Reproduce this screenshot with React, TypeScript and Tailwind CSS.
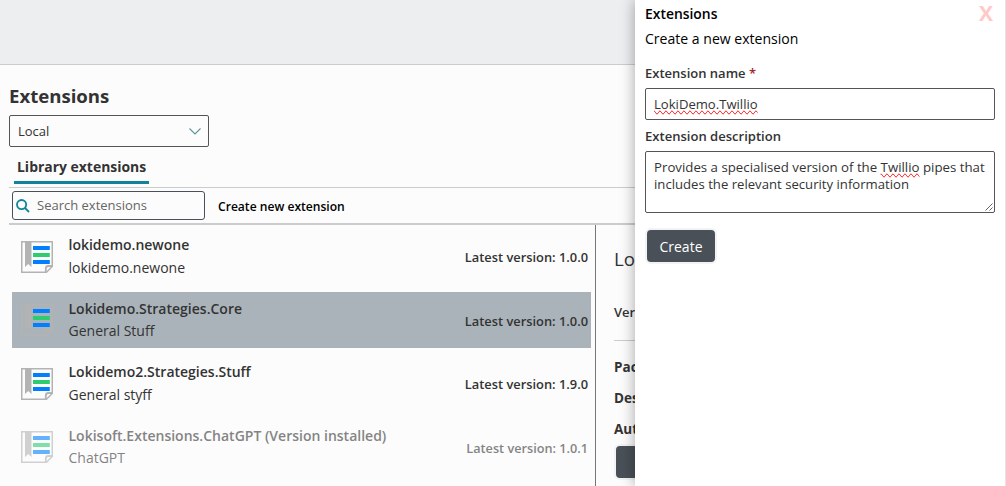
import React from "react";

type Extension = {
  name: string;
  description: string;
  version: string;
  selected?: boolean;
  installed?: boolean;
};

const extensions: Extension[] = [
  { name: "lokidemo.newone", description: "lokidemo.newone", version: "1.0.0" },
  { name: "Lokidemo.Strategies.Core", description: "General Stuff", version: "1.0.0", selected: true },
  { name: "Lokidemo2.Strategies.Stuff", description: "General styff", version: "1.9.0" },
  { name: "Lokisoft.Extensions.ChatGPT (Version installed)", description: "ChatGPT", version: "1.0.1", installed: true },
];

function LibraryIcon() {
  return (
    <svg width="32" height="32" viewBox="0 0 32 32" className="shrink-0">
      <path d="M0.75 0.75H31.25V25.5L25.5 31.25H0.75Z" fill="none" stroke="#b3b3b3" strokeWidth="1.5" />
      <path d="M24.8 31V27.5Q24.8 25 27.3 25H31" fill="none" stroke="#b3b3b3" strokeWidth="1.8" />
      <path d="M4 0H10.5V26L7.25 23L4 26Z" fill="#b3b3b3" />
      <path d="M12 5H28.8V9H12Z" fill="#0080ff" />
      <path d="M12 12H28.8V16H12Z" fill="#2ecc71" />
      <path d="M12 19H28.8V23H12Z" fill="#0080ff" />
    </svg>
  );
}

function ExtensionRow({ item }: { item: Extension }) {
  return (
    <li
      className={
        "flex h-14 items-center pr-[3px] pl-[9px] " +
        (item.selected ? "bg-[#abb3ba] " : "") +
        (item.installed ? "opacity-60" : "")
      }
    >
      <LibraryIcon />
      <div className="ml-[15.5px] grow">
        <div className="text-[14px] leading-[21.6px] font-semibold">{item.name}</div>
        <div className="mt-[0.8px] text-[14px] leading-[22px]">{item.description}</div>
      </div>
      <div className={"pt-[1.6px] leading-5 font-semibold " + (item.installed ? "text-[12.7px]" : "text-[12.85px]")}>
        Latest version: {item.version}
      </div>
    </li>
  );
}

function CreatePanel() {
  return (
    <aside className="absolute inset-y-0 right-0 w-[371px] border-r border-[#e4e4e4] bg-white pr-[10px] pl-[10px] shadow-[0_0_14px_rgba(0,0,0,0.35)]">
      <header className="flex h-[27px] items-start justify-between">
        <h2 className="mt-1 text-[13.9px] leading-5 font-semibold text-black">Extensions</h2>
        <button className="mr-[2px] text-[21px] leading-[26px] font-bold text-[#ffc9c9]">X</button>
      </header>
      <p className="mt-[2px] text-[14.05px] leading-5 text-black">Create a new extension</p>
      <label className="mt-[14px] block text-[13px] leading-5 font-semibold">
        Extension name <span className="text-[#a4262c]">*</span>
      </label>
      <div className="mt-[5px] flex h-8 items-center rounded-[2px] border border-[#555] px-2 pt-px text-[13.1px]">
        <span className="[text-decoration-line:spelling-error]">LokiDemo.Twillio</span>
      </div>
      <label className="mt-[6px] block text-[13.05px] leading-5 font-semibold">Extension description</label>
      <div className="relative mt-[5px] h-[62px] rounded-[2px] border border-[#555] px-2 pt-[7px] text-[13.25px] leading-[17px] whitespace-nowrap">
        Provides a specialised version of the <span className="[text-decoration-line:spelling-error]">Twillio</span> pipes that
        <br />
        <span className="text-[13.15px]">includes the relevant security information</span>
        <svg width="8" height="8" viewBox="0 0 8 8" className="absolute right-px bottom-px">
          <path d="M0.5 7.5L7.5 0.5M4.5 7.5L7.5 4.5" stroke="#555" strokeWidth="0.9" />
        </svg>
      </div>
      <button className="mt-[17px] ml-[2px] h-8 w-[68px] rounded-[4px] bg-[#495057] text-[14px] text-white shadow-[0_0_0_2px_#f1f3f5]">
        Create
      </button>
    </aside>
  );
}

export default function App() {
  return (
    <div className="relative flex h-[486px] w-[1006px] flex-col overflow-hidden bg-[#fcfcfc] font-['Open_Sans','Noto_Sans',sans-serif] text-[#333]">
      <div className="h-[65px] shrink-0 border-b border-[#ccc] bg-[#edeef0]" />
      <main className="flex grow flex-col pl-[9px]">
        <h1 className="mt-[17px] text-[18.6px] leading-7 font-bold">Extensions</h1>
        <div className="mt-[5px] flex h-8 w-[200px] items-center justify-between rounded-[2px] border border-[#555] pt-px pr-[7px] pl-2 text-[13px]">
          Local
          <svg width="12" height="7" viewBox="0 0 12 7" fill="none">
            <path d="M0.5 0.5L6 6L11.5 0.5" stroke="#5f9299" strokeWidth="1.1" />
          </svg>
        </div>
        <nav className="flex h-[41px] items-start border-b border-[#ccc] pl-[5px]">
          <div className="h-[37px] w-[135px] border-b-3 border-[#10849a] px-[3px] pt-[10px] text-[13.95px] leading-5 font-bold whitespace-nowrap">
            Library extensions
          </div>
        </nav>
        <div className="flex h-[37px] items-start border-b-2 border-[#ccc] pt-[3px] pl-[3px]">
          <div className="flex h-[29px] w-[193px] items-center rounded-[3px] border border-[#495057] pl-[3px] text-[13px] text-[#666]">
            <svg width="14" height="14" viewBox="0 0 14 14" fill="none" stroke="#10849a" strokeWidth="1.8" className="mr-[7px]">
              <circle cx="5.6" cy="5.6" r="4.6" />
              <path d="M9 9L13 13" />
            </svg>
            Search extensions
          </div>
          <button className="ml-[13px] h-[31px] pt-[2px] text-[12.1px] font-semibold text-black">Create new extension</button>
        </div>
        <div className="flex grow">
          <ul className="flex w-[587px] shrink-0 flex-col gap-[7.5px] border-r border-[#777] pt-[3.5px] pr-1 pl-[3px]">
            {extensions.map((item) => (
              <ExtensionRow key={item.name} item={item} />
            ))}
          </ul>
          <section className="grow pl-[18px]">
            <h2 className="mt-[20px] text-[18.7px] leading-7">Lok</h2>
            <p className="mt-[29px] text-[13px] leading-5 font-semibold">Vers</p>
            <hr className="mt-[18px] border-[#ccc]" />
            <p className="mt-[16px] text-[13.5px] leading-5 font-bold">Pack</p>
            <p className="mt-[11px] text-[13.5px] leading-5 font-bold">Desc</p>
            <p className="mt-[11px] text-[13.5px] leading-5 font-bold">Auth</p>
            <button className="mt-[7px] ml-[2px] h-8 w-20 rounded-[4px] bg-[#495057] text-[14px] text-white shadow-[0_0_0_2px_#f1f3f5]" />
          </section>
        </div>
      </main>
      <CreatePanel />
    </div>
  );
}
